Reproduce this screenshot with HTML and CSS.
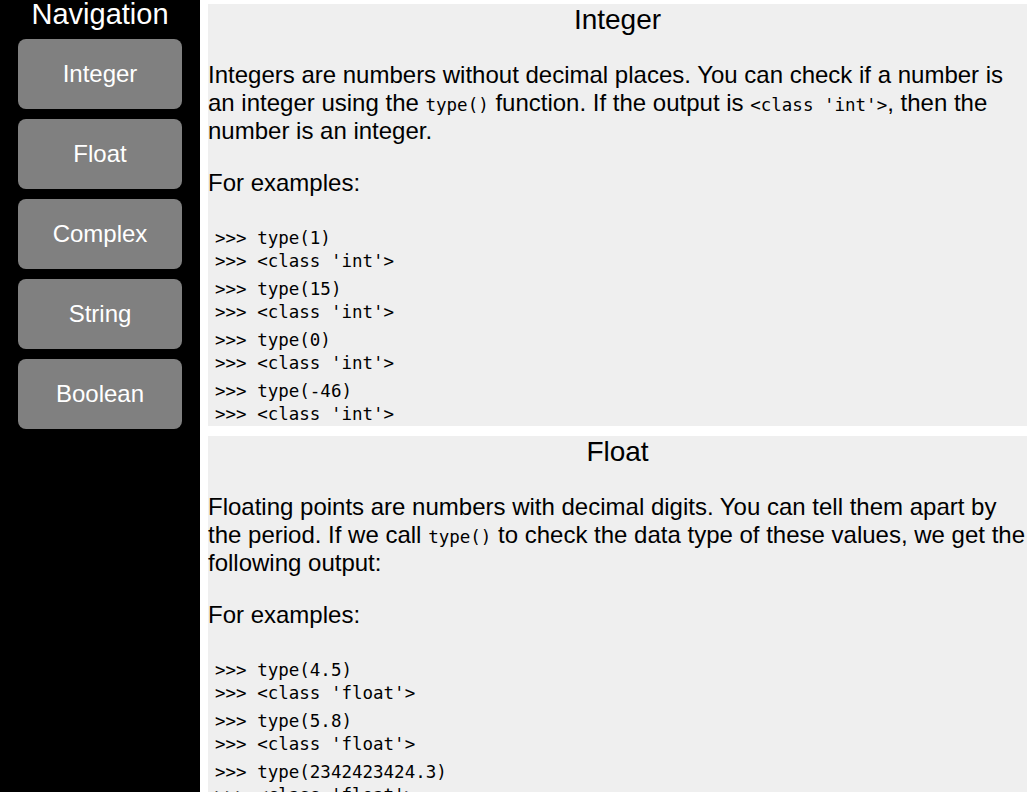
FILE: index.html
```html
<!DOCTYPE html>
<html lang="en">
<head>
<meta charset="utf-8">
<title>Python Data Types</title>
<link rel="stylesheet" href="styles.css">
</head>
<body>
<div class="layout">
  <nav class="sidebar">
    <h2 class="nav-title">Navigation</h2>
    <a class="nav-btn" href="#integer">Integer</a>
    <a class="nav-btn" href="#float">Float</a>
    <a class="nav-btn" href="#complex">Complex</a>
    <a class="nav-btn" href="#string">String</a>
    <a class="nav-btn" href="#boolean">Boolean</a>
  </nav>
  <main class="content">
    <section class="topic" id="integer">
      <h2 class="topic-title">Integer</h2>
      <p class="topic-text">Integers are numbers without decimal places. You can check if a number is an integer using the <code class="inline-code">type()</code> function. If the output is <code class="inline-code">&lt;class 'int'&gt;</code>, then the number is an integer.</p>
      <p class="topic-text">For examples:</p>
      <div class="examples">
        <div class="example"><div>&gt;&gt;&gt; type(1)</div><div>&gt;&gt;&gt; &lt;class 'int'&gt;</div></div>
        <div class="example"><div>&gt;&gt;&gt; type(15)</div><div>&gt;&gt;&gt; &lt;class 'int'&gt;</div></div>
        <div class="example"><div>&gt;&gt;&gt; type(0)</div><div>&gt;&gt;&gt; &lt;class 'int'&gt;</div></div>
        <div class="example"><div>&gt;&gt;&gt; type(-46)</div><div>&gt;&gt;&gt; &lt;class 'int'&gt;</div></div>
      </div>
    </section>
    <section class="topic" id="float">
      <h2 class="topic-title">Float</h2>
      <p class="topic-text">Floating points are numbers with decimal digits. You can tell them apart by the period. If we call <code class="inline-code">type()</code> to check the data type of these values, we get the following output:</p>
      <p class="topic-text">For examples:</p>
      <div class="examples">
        <div class="example"><div>&gt;&gt;&gt; type(4.5)</div><div>&gt;&gt;&gt; &lt;class 'float'&gt;</div></div>
        <div class="example"><div>&gt;&gt;&gt; type(5.8)</div><div>&gt;&gt;&gt; &lt;class 'float'&gt;</div></div>
        <div class="example"><div>&gt;&gt;&gt; type(2342423424.3)</div><div>&gt;&gt;&gt; &lt;class 'float'&gt;</div></div>
        <div class="example"><div>&gt;&gt;&gt; type(-1.0)</div><div>&gt;&gt;&gt; &lt;class 'float'&gt;</div></div>
      </div>
    </section>
  </main>
</div>
</body>
</html>
```

FILE: styles.css
```css
html, body {
  margin: 0;
  padding: 0;
  overflow: hidden;
  background: #ffffff;
}

body {
  font-family: "Liberation Sans", Arial, sans-serif;
  color: #000000;
}

.layout {
  display: flex;
  min-height: 100vh;
}

.sidebar {
  width: 200px;
  flex-shrink: 0;
  background: #000000;
  display: flex;
  flex-direction: column;
  align-items: stretch;
  gap: 10px;
}

.nav-title {
  margin: 0 0 1px;
  font-size: 29px;
  font-weight: normal;
  line-height: 28px;
  color: #ffffff;
  text-align: center;
}

.nav-btn {
  margin: 0 18px;
  height: 70px;
  display: flex;
  align-items: center;
  justify-content: center;
  background: #808080;
  border-radius: 8px;
  color: #ffffff;
  font-size: 24px;
  text-decoration: none;
}

.content {
  flex: 1;
  min-width: 0;
  padding: 4px 8px 0;
  display: flex;
  flex-direction: column;
  gap: 10px;
}

.topic {
  background: #efefef;
}

.topic-title {
  margin: 0 0 25px;
  font-size: 28px;
  font-weight: normal;
  text-align: center;
}

.topic-text {
  margin: 24px 0;
  font-size: 24px;
}

.inline-code {
  font-family: "DejaVu Sans Mono", "Liberation Mono", monospace;
  font-size: 17.5px;
}

.examples {
  margin-top: 30px;
  padding-left: 7px;
  display: flex;
  flex-direction: column;
  gap: 5px;
  font-family: "DejaVu Sans Mono", "Liberation Mono", monospace;
  font-size: 17.5px;
  line-height: 23px;
  white-space: pre;
}
```
